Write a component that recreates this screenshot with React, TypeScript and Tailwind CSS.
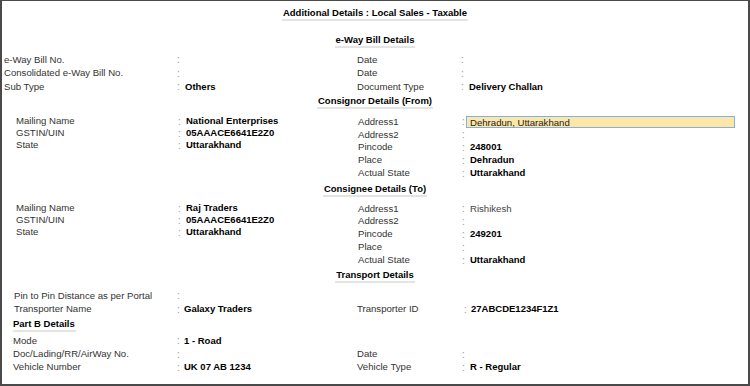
import React from "react";

type Field = {
  label: string;
  value?: string;
  bold?: boolean;
  input?: boolean;
};

type Cols = { l: number; c: number; v: number };

const font = { fontFamily: '"Liberation Sans", Arial, sans-serif' };

function Row({ f, cols, h }: { f: Field; cols: Cols; h: string }) {
  return (
    <div className={`flex items-center whitespace-nowrap ${h}`}>
      <div style={{ width: cols.c - cols.l }} className="text-[9.6px] text-[#333]">
        {f.label}
      </div>
      {f.input ? (
        <>
          <div style={{ width: cols.v - cols.c - 4 }} className="text-[10px] text-[#999]">:</div>
          <div className="h-[12.5px] w-[269px] self-start border border-[#7eb2e0] bg-[#fde6a8] pl-[3px] text-[9.6px] leading-[11px] text-[#222]">
            {f.value}
          </div>
        </>
      ) : (
        <>
          <div style={{ width: cols.v - cols.c }} className="text-[10px] text-[#999]">:</div>
          <div className={f.bold ? "text-[9.5px] font-bold text-black" : "text-[9.6px] text-[#444]"}>
            {f.value}
          </div>
        </>
      )}
    </div>
  );
}

function Heading({ text, className }: { text: string; className: string }) {
  return (
    <div className={`flex items-start justify-center ${className}`}>
      <span className="border-b-2 border-[#e4e4e4] px-[1px] text-[9.5px] leading-[12px] font-bold text-black">
        {text}
      </span>
    </div>
  );
}

function Block({
  left,
  right,
  lc,
  rc,
  lh,
  rh,
}: {
  left: Field[];
  right: Field[];
  lc: Cols;
  rc: Cols;
  lh: string;
  rh: string;
}) {
  return (
    <div className="flex">
      <div style={{ marginLeft: lc.l - 2, width: rc.l - lc.l }}>
        {left.map((f) => (
          <Row key={f.label} f={f} cols={lc} h={lh} />
        ))}
      </div>
      <div>
        {right.map((f, i) => (
          <Row key={f.label + i} f={f} cols={rc} h={rh} />
        ))}
      </div>
    </div>
  );
}

export default function App() {
  return (
    <div
      style={font}
      className="h-[386px] w-[750px] overflow-hidden border-x-2 border-t border-b-2 border-[#4a4a4a] bg-white"
    >
      <Heading text="Additional Details : Local Sales - Taxable" className="h-[29px] pt-[6px]" />
      <Heading text="e-Way Bill Details" className="h-[23px] pt-[4px]" />

      <Block
        lc={{ l: 4, c: 177, v: 185 }}
        rc={{ l: 357, c: 461, v: 469 }}
        lh="h-[13.5px]"
        rh="h-[13.5px]"
        left={[
          { label: "e-Way Bill No." },
          { label: "Consolidated e-Way Bill No." },
          { label: "Sub Type", value: "Others", bold: true },
        ]}
        right={[
          { label: "Date" },
          { label: "Date" },
          { label: "Document Type", value: "Delivery Challan", bold: true },
        ]}
      />

      <Heading text="Consignor Details (From)" className="h-[22px] pt-[1px]" />
      <Block
        lc={{ l: 16, c: 178, v: 186 }}
        rc={{ l: 358, c: 462, v: 470 }}
        lh="h-[12px]"
        rh="h-[12.8px]"
        left={[
          { label: "Mailing Name", value: "National Enterprises", bold: true },
          { label: "GSTIN/UIN", value: "05AAACE6641E2Z0", bold: true },
          { label: "State", value: "Uttarakhand", bold: true },
        ]}
        right={[
          { label: "Address1", value: "Dehradun, Uttarakhand", input: true },
          { label: "Address2" },
          { label: "Pincode", value: "248001", bold: true },
          { label: "Place", value: "Dehradun", bold: true },
          { label: "Actual State", value: "Uttarakhand", bold: true },
        ]}
      />

      <Heading text="Consignee Details (To)" className="h-[23px] pt-[4px]" />
      <Block
        lc={{ l: 16, c: 178, v: 186 }}
        rc={{ l: 358, c: 462, v: 470 }}
        lh="h-[12px]"
        rh="h-[12.8px]"
        left={[
          { label: "Mailing Name", value: "Raj Traders", bold: true },
          { label: "GSTIN/UIN", value: "05AAACE6641E2Z0", bold: true },
          { label: "State", value: "Uttarakhand", bold: true },
        ]}
        right={[
          { label: "Address1", value: "Rishikesh" },
          { label: "Address2" },
          { label: "Pincode", value: "249201", bold: true },
          { label: "Place" },
          { label: "Actual State", value: "Uttarakhand", bold: true },
        ]}
      />

      <Heading text="Transport Details" className="h-[22.5px] pt-[3px]" />
      <div className="flex">
        <div className="ml-[12px] w-[343px]">
          <Row f={{ label: "Pin to Pin Distance as per Portal" }} cols={{ l: 14, c: 177, v: 184 }} h="h-[13.6px]" />
          <Row
            f={{ label: "Transporter Name", value: "Galaxy Traders", bold: true }}
            cols={{ l: 14, c: 177, v: 184 }}
            h="h-[13.6px]"
          />
        </div>
        <div className="pt-[13.6px]">
          <Row
            f={{ label: "Transporter ID", value: "27ABCDE1234F1Z1", bold: true }}
            cols={{ l: 357, c: 464, v: 471 }}
            h="h-[13.6px]"
          />
        </div>
      </div>

      <div className="flex h-[18.2px] items-start pl-[11px] pt-[1.5px]">
        <span className="border-b-2 border-[#e4e4e4] pr-[1px] text-[9.5px] leading-[12px] font-bold text-black">
          Part B Details
        </span>
      </div>
      <div className="flex">
        <div className="ml-[11px] w-[344px]">
          <Row f={{ label: "Mode", value: "1 - Road", bold: true }} cols={{ l: 13, c: 177, v: 184 }} h="h-[13.2px]" />
          <Row f={{ label: "Doc/Lading/RR/AirWay No." }} cols={{ l: 13, c: 177, v: 184 }} h="h-[13.2px]" />
          <Row
            f={{ label: "Vehicle Number", value: "UK 07 AB 1234", bold: true }}
            cols={{ l: 13, c: 177, v: 184 }}
            h="h-[13.2px]"
          />
        </div>
        <div className="pt-[13.2px]">
          <Row f={{ label: "Date" }} cols={{ l: 357, c: 462, v: 470 }} h="h-[13.2px]" />
          <Row
            f={{ label: "Vehicle Type", value: "R - Regular", bold: true }}
            cols={{ l: 357, c: 462, v: 470 }}
            h="h-[13.2px]"
          />
        </div>
      </div>
    </div>
  );
}
